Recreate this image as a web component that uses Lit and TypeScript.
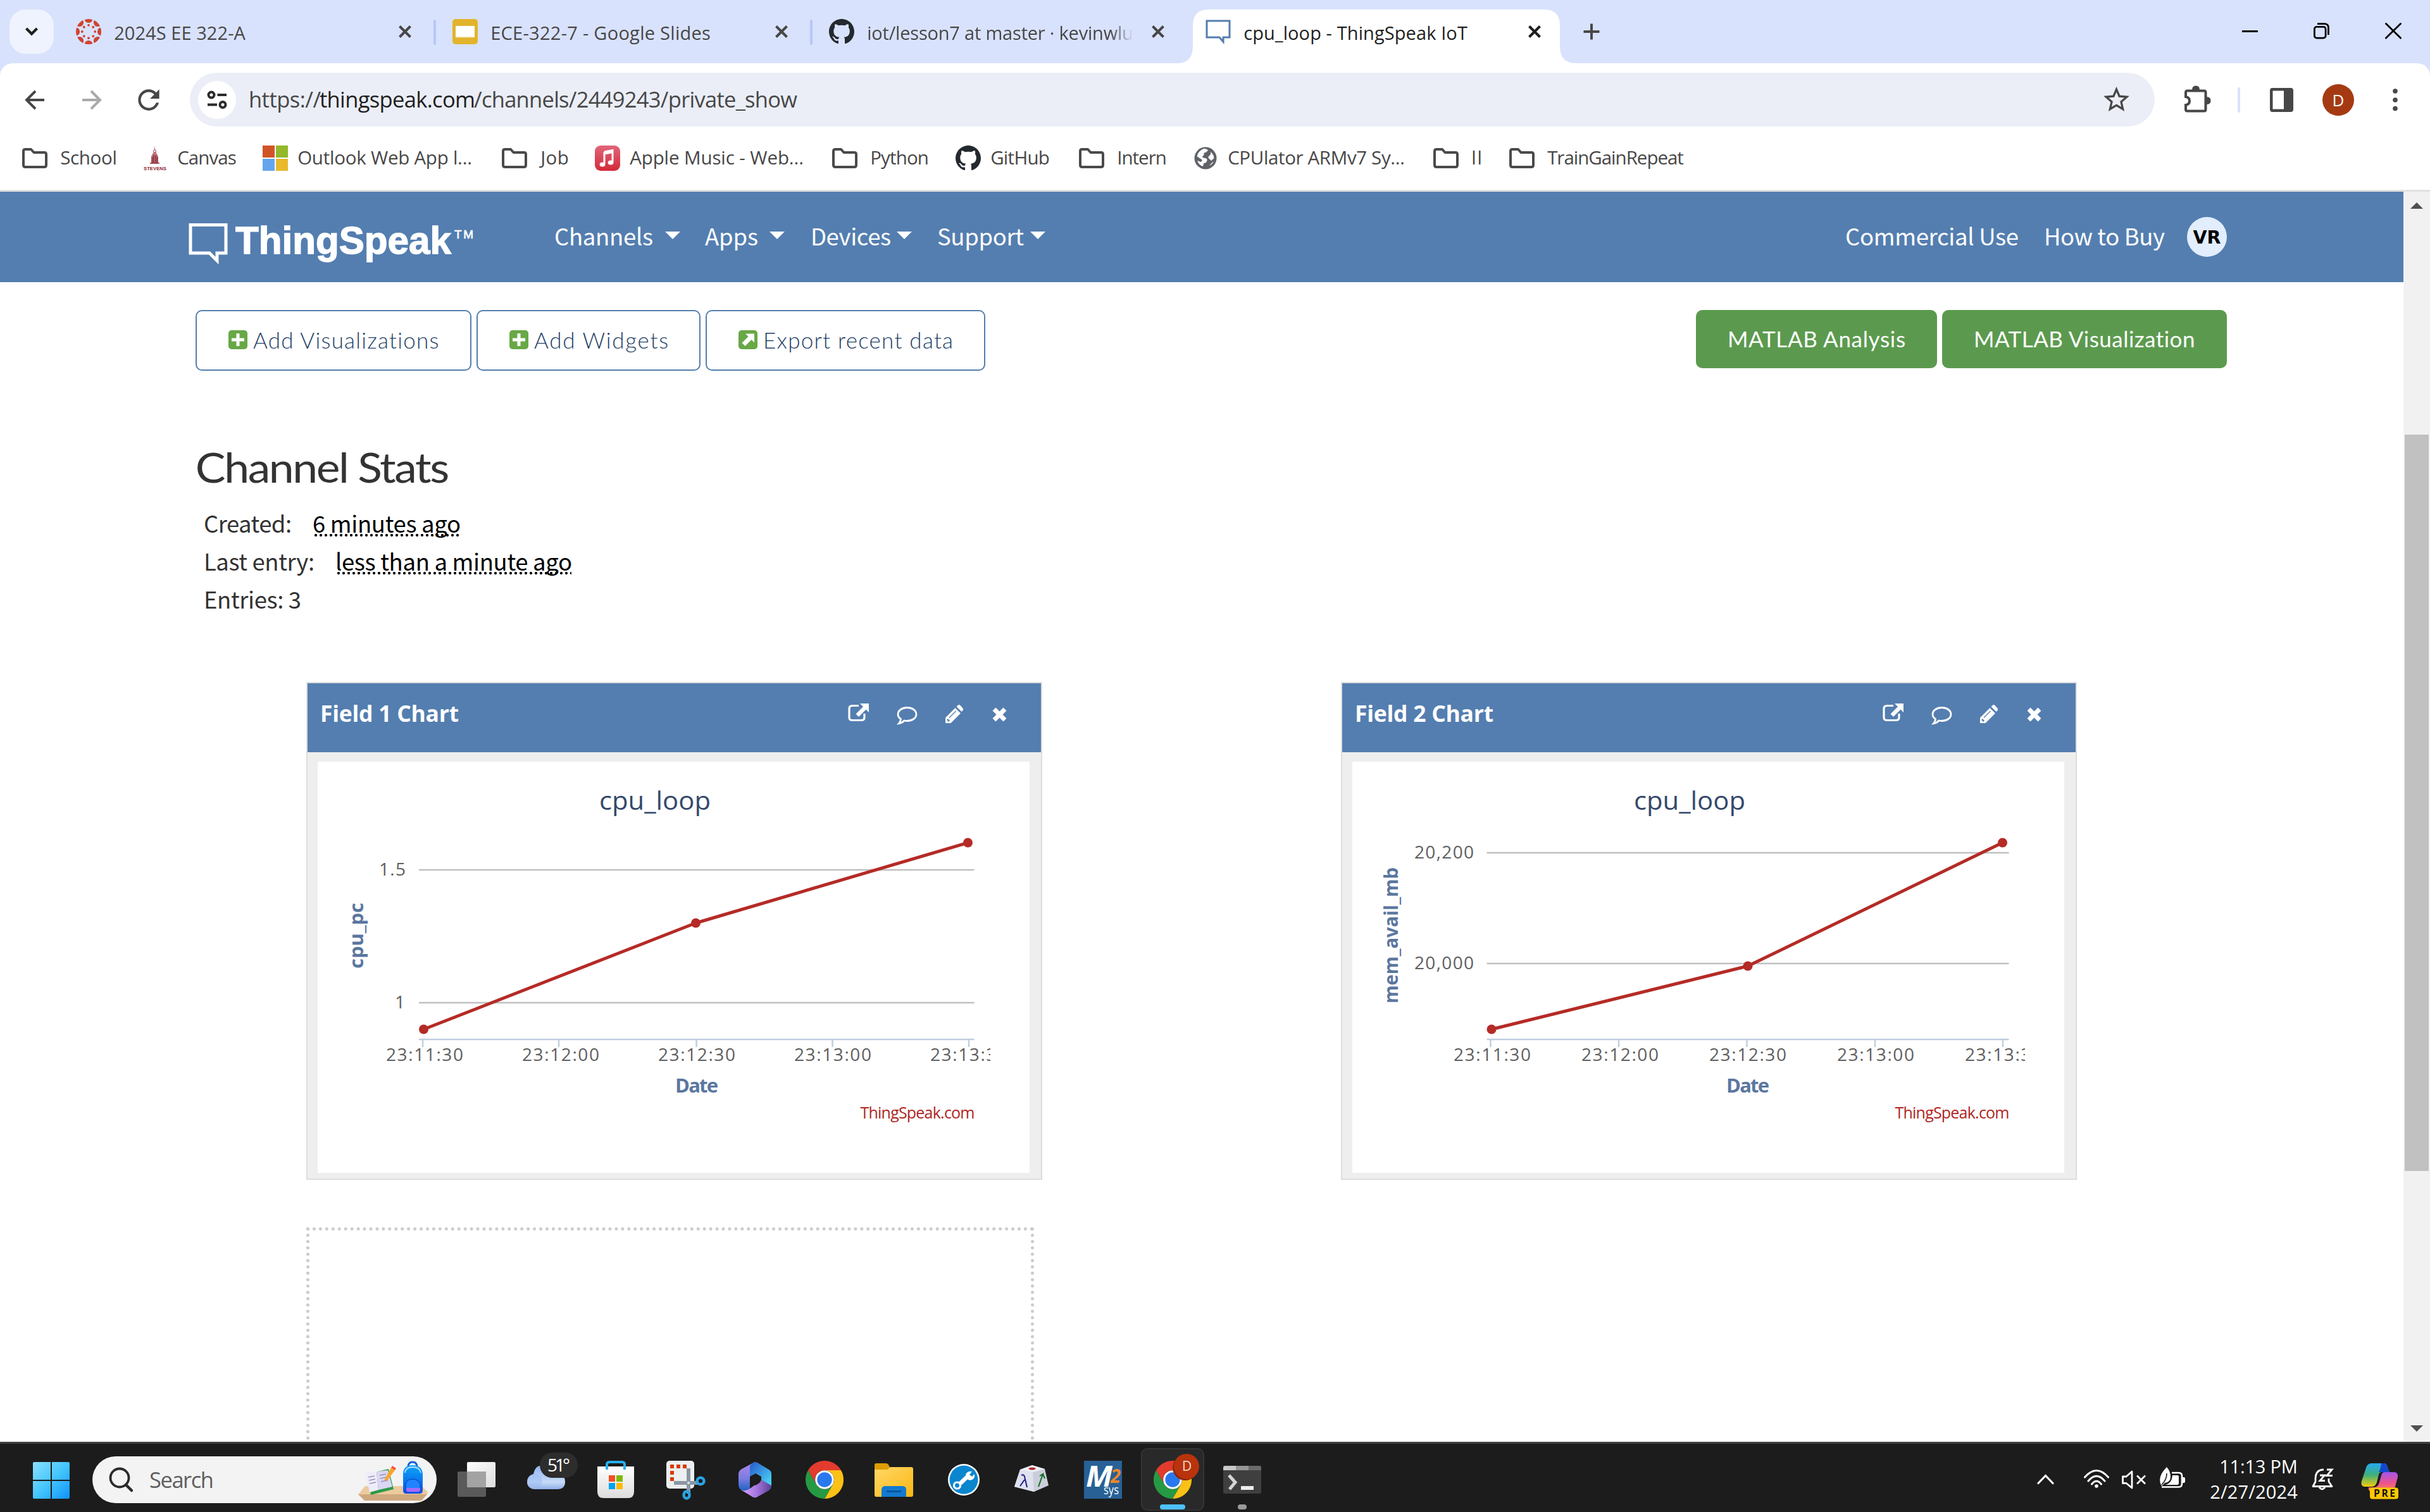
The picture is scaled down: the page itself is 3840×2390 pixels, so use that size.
import { LitElement, html, svg, css, nothing } from "lit";
import { customElement, property } from "lit/decorators.js";

/** A single line of text whose tracking is adjusted so that it fills a given width. */
@customElement("fit-text")
class FitText extends LitElement {
  @property() text = "";
  @property({ type: Number }) w = 0;

  static styles = css`
    :host {
      display: block;
      flex: none;
      white-space: pre;
    }
    .run {
      display: inline-block;
      margin-left: -0.03em;
    }
  `;

  updated() {
    const run = this.renderRoot.querySelector(".run") as HTMLElement;
    this.style.width = `${this.w}px`;
    run.style.letterSpacing = "0px";
    const size = parseFloat(getComputedStyle(run).fontSize);
    const natural = run.getBoundingClientRect().width;
    const gap = (this.w + size * 0.06 - natural) / Math.max(1, this.text.length - 1);
    run.style.letterSpacing = `${gap}px`;
  }

  render() {
    return html`<span class="run">${this.text}</span>`;
  }
}

const fit = (text: string, w: number, cls = "") =>
  html`<fit-text class=${cls} .text=${text} .w=${w}></fit-text>`;

const OCTO =
  "M8 0C3.58 0 0 3.58 0 8c0 3.54 2.29 6.53 5.47 7.59.4.07.55-.17.55-.38 0-.19-.01-.82-.01-1.49-2.01.37-2.53-.49-2.69-.94-.09-.23-.48-.94-.82-1.13-.28-.15-.68-.52-.01-.53.63-.01 1.08.58 1.23.82.72 1.21 1.87.87 2.33.66.07-.52.28-.87.51-1.07-1.78-.2-3.64-.89-3.64-3.95 0-.87.31-1.59.82-2.15-.08-.2-.36-1.02.08-2.12 0 0 .67-.21 2.2.82.64-.18 1.32-.27 2-.27.68 0 1.36.09 2 .27 1.53-1.04 2.2-.82 2.2-.82.44 1.1.16 1.92.08 2.12.51.56.82 1.27.82 2.15 0 3.07-1.87 3.75-3.65 3.95.29.25.54.73.54 1.48 0 1.07-.01 1.93-.01 2.2 0 .21.15.46.55.38A8.013 8.013 0 0016 8c0-4.42-3.58-8-8-8z";

const github = html`<svg width="40" height="40" viewBox="0 0 16 16"><path d=${OCTO} fill="#24292f" /></svg>`;

const canvasRing = html`<svg width="40" height="40" viewBox="-20 -20 40 40">
  <clipPath id="ring"><circle r="20" /></clipPath>
  <g clip-path="url(#ring)" fill="#cf4432">
    ${[0, 45, 90, 135, 180, 225, 270, 315].map(
      (a) => svg`<g transform="rotate(${a})"><circle cy="-20.5" r="6.6" /><circle cy="-10.2" r="1.9" /></g>`
    )}
  </g>
</svg>`;

const slides = html`<svg width="40" height="40" viewBox="0 0 40 40">
  <rect width="40" height="40" rx="5" fill="#e2b42c" />
  <rect x="5" y="11" width="30" height="18.5" fill="#f3dfa4" />
  <rect x="5" y="11" width="30" height="17" fill="#fff" />
</svg>`;

const bubble = html`<svg width="40" height="40" viewBox="0 0 40 40">
  <path d="M2 3H38V29H28V36L22 29H2Z" fill="#fff" stroke="#547eb0" stroke-width="3" />
</svg>`;

const folder = html`<svg width="42" height="40" viewBox="0 0 42 40">
  <path d="M3 9Q3 6 6 6H15L19.500 11H36Q39 11 39 14V31Q39 34 36 34H6Q3 34 3 31Z" fill="none" stroke="#4a4a4a" stroke-width="4" stroke-linejoin="round" />
</svg>`;

const stevens = html`<svg width="40" height="40" viewBox="0 0 40 40">
  <path d="M17.500 0L18.500 9L23 17V28H12V17L16.500 9Z" fill="#b97982" />
  <path d="M13.500 18V27M16 15V27M19 15V27M21.500 18V27M10 28H25" stroke="#8a2634" stroke-width="1.500" />
  <circle cx="17.500" cy="9" r="2" fill="#fff" stroke="#a03845" />
  <text x="0" y="39" font-family="Liberation Sans" font-size="8" font-weight="700" fill="#8f2433" textLength="36" lengthAdjust="spacingAndGlyphs">STEVENS</text>
</svg>`;

const msSquares = html`<svg width="40" height="40" viewBox="0 0 40 40">
  <path d="M0 0H19V19H0Z" fill="#d15427" /><path d="M21 0H40V19H21Z" fill="#93b82a" />
  <path d="M0 21H19V40H0Z" fill="#66a5ee" /><path d="M21 21H40V40H21Z" fill="#e9b92c" />
</svg>`;

const music = html`<svg width="40" height="40" viewBox="0 0 40 40">
  <linearGradient id="mus" x2="0" y2="1"><stop stop-color="#e0667a" /><stop offset="1" stop-color="#d32a3a" /></linearGradient>
  <rect width="40" height="40" rx="9" fill="url(#mus)" />
  <path d="M15 10L28 7.500V26.500M15 10V29.500M15 13L28 10.500" stroke="#fff" stroke-width="3" fill="none" />
  <ellipse cx="12" cy="30" rx="4.400" ry="3.600" fill="#fff" /><ellipse cx="25" cy="27" rx="4.400" ry="3.600" fill="#fff" />
</svg>`;

const globe = html`<svg width="36" height="40" viewBox="0 0 36 40">
  <circle cx="18" cy="20" r="17.500" fill="#5f6368" />
  <path d="M15 5Q21 5 22 8Q19 11 15 12Q17 15 13 17Q13 20 18 20Q22 21 20 25Q19 28 15 28Q15 32 13 33Q7 30 5 24L11 26L13 23L4.500 17Q6 9 15 5Z" fill="#fff" />
  <path d="M26 10Q31 14 31.500 20L27 24L22 19L24 16Q27 15 26 10ZM24 32Q27 28 31 25Q29 30 24 32Z" fill="#fff" />
</svg>`;

const closeX = (color: string) => html`<svg class="close" width="20" height="20" viewBox="0 0 20 20">
  <path d="M1.500 1.500L18.500 18.500M18.500 1.500L1.500 18.500" stroke=${color} stroke-width="4" />
</svg>`;

const TABS = [
  { icon: canvasRing, title: "2024S EE 322-A", w: 206 },
  { icon: slides, title: "ECE-322-7 - Google Slides", w: 346 },
  { icon: github, title: "iot/lesson7 at master · kevinwlu", w: 419, fade: true },
  { icon: bubble, title: "cpu_loop - ThingSpeak IoT", w: 352, active: true },
];

/* icon left edge, label left edge, label width */
const BOOKMARKS = [
  { icon: folder, title: "School", x: 34, tx: 96, w: 88 },
  { icon: stevens, title: "Canvas", x: 227, tx: 281, w: 92 },
  { icon: msSquares, title: "Outlook Web App l...", x: 415, tx: 471, w: 274 },
  { icon: folder, title: "Job", x: 792, tx: 855, w: 43 },
  { icon: music, title: "Apple Music - Web...", x: 940, tx: 996, w: 273 },
  { icon: folder, title: "Python", x: 1314, tx: 1376, w: 91 },
  { icon: github, title: "GitHub", x: 1510, tx: 1566, w: 92 },
  { icon: folder, title: "Intern", x: 1704, tx: 1766, w: 77 },
  { icon: globe, title: "CPUlator ARMv7 Sy...", x: 1887, tx: 1941, w: 278 },
  { icon: folder, title: "ll", x: 2264, tx: 2326, w: 15 },
  { icon: folder, title: "TrainGainRepeat", x: 2384, tx: 2446, w: 214 },
];

@customElement("browser-chrome")
class BrowserChrome extends LitElement {
  static styles = css`
    :host {
      display: block;
      font-family: "Open Sans", "Noto Sans", sans-serif;
      color: #474747;
    }
    svg {
      display: block;
      flex: none;
    }
    .strip {
      display: flex;
      height: 100px;
      background: #d9e2fc;
      font-size: 29px;
      line-height: 40px;
    }
    .search-tabs {
      flex: none;
      display: grid;
      place-items: center;
      width: 70px;
      height: 70px;
      margin: 15px 5px 0 15px;
      border-radius: 25px;
      background: #eef3fe;
    }
    .tab {
      position: relative;
      flex: none;
      box-sizing: border-box;
      width: 595px;
      height: 100px;
      padding-left: 30px;
      display: flex;
      align-items: center;
      gap: 21px;
    }
    .label {
      width: 434px;
      overflow: hidden;
      margin-top: 3px;
    }
    .faded {
      -webkit-mask-image: linear-gradient(90deg, #000 385px, transparent 420px);
      mask-image: linear-gradient(90deg, #000 385px, transparent 420px);
    }
    .tab .close {
      margin-left: -6px;
    }
    .tab.divided::after {
      content: "";
      position: absolute;
      right: -4px;
      top: 31px;
      width: 4px;
      height: 40px;
      border-radius: 2px;
      background: #b6c8f8;
    }
    .tab .shape {
      position: absolute;
      left: -15px;
      top: 15px;
    }
    .tab.active {
      color: #1f1f1f;
    }
    .tab.active > * {
      z-index: 1;
    }
    .tab.active > .shape {
      z-index: 0;
    }
    .plus {
      margin: 37px 0 0 32px;
    }
    .window {
      margin: 36px 45px 0 auto;
      display: flex;
      gap: 88px;
    }
    .bars {
      background: #d9e2fc;
    }
    .sheet {
      background: #fff;
      border-radius: 20px 20px 0 0;
      border-bottom: 3px solid #e1e1df;
    }
    .tools {
      display: flex;
      align-items: center;
      height: 85px;
      padding: 15px 0 0 30px;
    }
    .forward {
      margin-left: 40px;
    }
    .reload {
      margin-left: 40px;
    }
    .omni {
      box-sizing: border-box;
      display: flex;
      align-items: center;
      width: 3105px;
      height: 85px;
      margin-left: 40px;
      padding: 0 36px 0 13px;
      border-radius: 43px;
      background: #ebeef7;
      font-size: 34.500px;
      line-height: 50px;
    }
    .info {
      display: grid;
      place-items: center;
      width: 60px;
      height: 60px;
      border-radius: 50%;
      background: #fff;
      margin-right: 21px;
    }
    .host {
      color: #1f1f1f;
    }
    .omni fit-text {
      margin-top: -2px;
    }
    .omni .star {
      margin-left: auto;
    }
    .ext {
      margin-left: 45px;
    }
    .rule {
      width: 4px;
      height: 40px;
      margin: 0 47px 0 40px;
      background: #d9e2fc;
      border-radius: 2px;
    }
    .avatar {
      width: 50px;
      height: 50px;
      margin: 0 60px 0 46px;
      border-radius: 50%;
      background: #a53a12;
      color: #fff;
      font-size: 26px;
      line-height: 51px;
      text-align: center;
    }
    .marks {
      display: flex;
      align-items: center;
      height: 100px;
      padding-left: 34px;
      font-size: 29.500px;
      line-height: 40px;
    }
    .mark {
      display: grid;
      align-items: center;
      flex: none;
    }
    .mark fit-text {
      margin-top: -3px;
    }
  `;

  render() {
    return html`
      <div class="strip">
        <div class="search-tabs">
          <svg width="22" height="16" viewBox="0 0 22 16"><path d="M2.500 3L11 11.500L19.500 3" fill="none" stroke="#1f1f1f" stroke-width="4.200" /></svg>
        </div>
        ${TABS.map(
          (t, i) => html`<div class="tab ${t.active ? "active" : ""} ${i < 2 ? "divided" : ""}">
            ${t.active
              ? html`<svg class="shape" width="630" height="85" viewBox="0 0 630 85">
                  <path d="M0 85Q25 85 25 58V25Q25 0 50 0H580Q605 0 605 25V58Q605 85 630 85Z" fill="#fff" />
                </svg>`
              : nothing}
            ${t.icon}
            <div class="label ${t.fade ? "faded" : ""}">${fit(t.title, t.w)}</div>
            ${closeX(t.active ? "#1f1f1f" : "#474747")}
          </div>`
        )}
        <svg class="plus" width="26" height="26" viewBox="0 0 26 26"><path d="M13 0.500V25.500M0.500 13H25.500" stroke="#474747" stroke-width="4" /></svg>
        <div class="window">
          <svg width="25" height="26" viewBox="0 0 25 26"><path d="M0 13.500H25" stroke="#000" stroke-width="3" /></svg>
          <svg width="25" height="26" viewBox="0 0 25 26" fill="none" stroke="#000" stroke-width="2.800">
            <rect x="1.400" y="6.400" width="17.700" height="17.700" rx="3.500" /><path d="M6 1.700H17Q23.500 1.700 23.500 8V19" />
          </svg>
          <svg width="26" height="26" viewBox="0 0 26 26"><path d="M0.500 0.500L25.500 25M25.500 0.500L0.500 25" stroke="#000" stroke-width="2.800" /></svg>
        </div>
      </div>
      <div class="bars">
        <div class="sheet">
          <div class="tools">
            <svg width="50" height="50" viewBox="0 0 50 50"><path d="M40 25H13M26 11L12 25L26 39" fill="none" stroke="#474747" stroke-width="4" /></svg>
            <svg class="forward" width="50" height="50" viewBox="-10 0 50 50"><path d="M0 25H27M14 11L28 25L14 39" fill="none" stroke="#a9a9a9" stroke-width="4" /></svg>
            <svg class="reload" width="50" height="50" viewBox="0 0 24 24"><path fill="#474747" d="M17.650 6.350C16.200 4.900 14.210 4 12 4c-4.420 0-7.990 3.580-7.990 8s3.570 8 7.990 8c3.730 0 6.840-2.550 7.730-6h-2.080c-.82 2.330-3.040 4-5.650 4-3.310 0-6-2.690-6-6s2.690-6 6-6c1.660 0 3.140.69 4.220 1.780L13 11h7V4l-2.350 2.350z" /></svg>
            <div class="omni">
              <div class="info">
                <svg width="32" height="30" viewBox="0 0 32 30" fill="none" stroke="#2b2b2b" stroke-width="4">
                  <circle cx="7" cy="7" r="4.500" /><path d="M16.500 7H31M1 22.500H16" /><circle cx="25" cy="22.500" r="4.500" />
                </svg>
              </div>
              ${fit("https://", 112)}${fit("thingspeak.com", 244, "host")}${fit("/channels/2449243/private_show", 509)}
              <svg class="star" width="49" height="49" viewBox="0 0 24 24"><path fill="#474747" d="M22 9.240l-7.190-.62L12 2 9.190 8.630 2 9.240l5.460 4.730L5.820 21 12 17.270 18.180 21l-1.630-7.030L22 9.240zM12 15.400l-3.760 2.270 1-4.280-3.320-2.880 4.380-.38L12 6.100l1.710 4.040 4.380.38-3.320 2.880 1 4.280L12 15.400z" /></svg>
            </div>
            <svg class="ext" width="46" height="50" viewBox="0 0 46 50">
              <path d="M4 13Q4 10.500 6.500 10.500H33Q35.500 10.500 35.500 13V40Q35.500 42.500 33 42.500H6.500Q4 42.500 4 40V33Q10 32 10 26.500T4 20Z" fill="none" stroke="#474747" stroke-width="4" />
              <path d="M14 9Q14 2.500 20 2.500T26 9ZM37 20Q43.500 20 43.500 26T37 32Z" fill="#474747" />
            </svg>
            <div class="rule"></div>
            <svg width="37" height="38" viewBox="0 0 37 38"><path fill="#474747" fill-rule="evenodd" d="M4 0H33Q37 0 37 4V34Q37 38 33 38H4Q0 38 0 34V4Q0 0 4 0ZM4.500 4.500V33.500H22V4.500Z" /></svg>
            <div class="avatar">D</div>
            <svg width="10" height="38" viewBox="0 0 10 38" fill="#474747"><circle cx="5" cy="5" r="3.800" /><circle cx="5" cy="19" r="3.800" /><circle cx="5" cy="32.500" r="3.800" /></svg>
          </div>
          <div class="marks">
            ${BOOKMARKS.map((b, i) => {
              const next = BOOKMARKS[i + 1]?.x ?? b.tx + b.w;
              return html`<div class="mark" style="grid-template-columns:${b.tx - b.x}px ${next - b.tx}px">
                ${b.icon}${fit(b.title, b.w)}
              </div>`;
            })}
          </div>
        </div>
      </div>
    `;
  }
}

interface ChartData {
  title: string;
  yTitle: string;
  yTitleSpan: [number, number];
  left: number;
  grid: { y: number; label: string; x: number; w: number }[];
  ticks: number[];
  labels: number[];
  points: [number, number][];
  dateX: number;
}

const CHARTS: ChartData[] = [
  {
    title: "Field 1 Chart",
    yTitle: "cpu_pc",
    yTitleSpan: [225, 326],
    left: 160,
    grid: [
      { y: 171, label: "1.5", x: 97, w: 42 },
      { y: 381, label: "1", x: 122, w: 14 },
    ],
    ticks: [166, 381, 598.5, 813.5, 1029],
    labels: [109, 324, 539, 754, 969],
    points: [[167.5, 423], [597.5, 255], [1027.5, 128]],
    dateX: 567,
  },
  {
    title: "Field 2 Chart",
    yTitle: "mem_avail_mb",
    yTitleSpan: [169, 381],
    left: 212.5,
    grid: [
      { y: 144, label: "20,200", x: 98, w: 94 },
      { y: 319, label: "20,000", x: 98, w: 94 },
    ],
    ticks: [218.5, 421, 623.5, 826, 1028],
    labels: [161, 363, 565, 767, 969],
    points: [[220, 423], [625, 323], [1027.5, 128]],
    dateX: 593,
  },
];
const TIMES = ["23:11:30", "23:12:00", "23:12:30", "23:13:00", "23:13:30"];

@customElement("field-card")
class FieldCard extends LitElement {
  @property({ attribute: false }) data!: ChartData;

  static styles = css`
    :host {
      display: block;
      box-sizing: border-box;
      width: 1163px;
      height: 787px;
      border: 2px solid #ddd;
      background: #eee;
      font-family: "Open Sans", "Noto Sans", sans-serif;
    }
    svg {
      display: block;
      flex: none;
    }
    .head {
      display: flex;
      box-sizing: border-box;
      height: 109px;
      padding: 20px 54px 0 21px;
      background: #547eb0;
      color: #fff;
      font-size: 35.500px;
      font-weight: 700;
      line-height: 54px;
    }
    .acts {
      display: flex;
      margin-left: auto;
    }
    .body {
      margin: 15px 18px 0 16px;
      height: 650px;
      background: #fff;
    }
  `;

  render() {
    const d = this.data;
    const [y0, y1] = d.yTitleSpan;
    return html`
      <div class="head">
        ${fit(d.title, 217)}
        <div class="acts">
          <svg width="77" height="52" viewBox="0 0 77 52">
            <path d="M17 15.500H7Q2 15.500 2 20V34Q2 38.500 7 38.500H21Q26 38.500 26 34V28" fill="none" stroke="#fff" stroke-width="3.200" />
            <path d="M19 12H33V26L28.500 21.500L17 33L12.500 28.500L24 17Z" fill="#fff" />
          </svg>
          <svg width="76" height="52" viewBox="0 0 76 52">
            <path d="M16.500 18.500C24.500 18.500 31 23 31 29S24.500 39.500 16.500 39.500C15 39.500 13.500 39.300 12 39Q9 42.500 3.500 43.500Q6.500 40 6.500 36.500C3.500 34.500 2 32 2 29C2 23 8.500 18.500 16.500 18.500Z" fill="none" stroke="#fff" stroke-width="2.800" />
          </svg>
          <svg width="75" height="52" viewBox="0 0 75 52">
            <path d="M1 43V34.500L16.500 19L25 27.500L9.500 43ZM18.500 17L21 14.500Q22.500 13.500 24 14.500L28.500 19.500Q30 21 28.500 23L26.500 25Z" fill="#fff" />
            <path d="M7 34.500L17.500 24" stroke="#547eb0" stroke-width="1.200" /><path d="M4 37L7 40" stroke="#547eb0" stroke-width="2.500" />
          </svg>
          <svg width="23" height="52" viewBox="0 0 23 52"><path d="M3 21L20 38M20 21L3 38" stroke="#fff" stroke-width="7" /></svg>
        </div>
      </div>
      <div class="body">
        <svg width="1125" height="650" viewBox="0 0 1125 650" font-family="'Open Sans','Noto Sans',sans-serif">
          <clipPath id="edge"><rect width="1063" height="650" /></clipPath>
          <text x="445" y="76" font-size="40" fill="#34496b" textLength="176" lengthAdjust="spacingAndGlyphs">cpu_loop</text>
          ${d.grid.map(
            (g) => svg`<path d="M${d.left} ${g.y}H1037.500" stroke="#c0c0c0" stroke-width="2.500" />
              <text x=${g.x} y=${g.y + 9} font-size="28" fill="#606060" textLength=${g.w}>${g.label}</text>`
          )}
          <path d="M${d.left} 439H1037.500" stroke="#c0cde0" stroke-width="2.500" />
          ${d.ticks.map((x) => svg`<path d="M${x} 439V451" stroke="#c0cde0" stroke-width="2.500" />`)}
          <g clip-path="url(#edge)" font-size="28" fill="#606060">
            ${d.labels.map((x, i) => svg`<text x=${x - 1} y="473" textLength="122">${TIMES[i]}</text>`)}
          </g>
          <polyline points=${d.points.map((p) => p.join(",")).join(" ")} fill="none" stroke="#b52b26" stroke-width="5" stroke-linejoin="round" />
          ${d.points.map(([x, y]) => svg`<circle cx=${x} cy=${y} r="7.500" fill="#b52b26" />`)}
          <text x=${d.dateX - 2} y="523" font-size="31" font-weight="700" fill="#5b769f" textLength="68">Date</text>
          <text transform="translate(72 ${y1 + 1}) rotate(-90)" font-size="30" font-weight="700" fill="#5b769f" textLength=${y1 - y0 + 3} lengthAdjust="spacingAndGlyphs">${d.yTitle}</text>
          <text x="857.500" y="564" font-size="25" fill="#b0261f" textLength="181">ThingSpeak.com</text>
        </svg>
      </div>
    `;
  }
}

const caret = (gap: number, after: number) =>
  html`<svg width="24" height="12" viewBox="0 0 24 12" style="margin:-6px ${after}px 0 ${gap}px"><path d="M0 0H24L12 12Z" fill="#fff" /></svg>`;

const plusBadge = html`<svg width="30" height="30" viewBox="0 0 30 30"><rect width="30" height="30" rx="5" fill="#68a846" /><path d="M15 5V25M5 15H25" stroke="#fff" stroke-width="5" /></svg>`;
const arrowBadge = html`<svg width="30" height="30" viewBox="0 0 30 30"><rect width="30" height="30" rx="5" fill="#68a846" /><path d="M11 5.500H25V19.500L20.500 15L10.500 25L5.500 20L15.500 10Z" fill="#fff" /></svg>`;

@customElement("channel-page")
class ChannelPage extends LitElement {
  static styles = css`
    :host {
      display: flex;
      height: 1976px;
      overflow: hidden;
      background: #fff;
      color: #333;
      font-family: "Noto Sans CJK SC", sans-serif;
      font-size: 36.500px;
    }
    svg {
      display: block;
      flex: none;
    }
    .page {
      width: 3798px;
      overflow: hidden;
    }
    nav {
      display: flex;
      align-items: center;
      height: 143px;
      padding-left: 298px;
      background: #547eb0;
      color: #fff;
      line-height: 60px;
    }
    nav fit-text {
      margin-top: -3px;
    }
    .logo {
      margin-right: 129px;
    }
    .right {
      display: flex;
      align-items: center;
      gap: 42px;
      margin: 0 279px 0 auto;
    }
    .user {
      width: 63px;
      height: 63px;
      margin-left: -6px;
      border-radius: 50%;
      background: #e2edfd;
      color: #000;
      text-align: center;
      font: 700 28.500px/65px "DejaVu Sans", sans-serif;
    }
    .actions {
      display: flex;
      align-items: flex-start;
      gap: 8px;
      padding: 44px 279px 0 309px;
      height: 96px;
      font: 300 35px/50px Lato, sans-serif;
    }
    .btn {
      box-sizing: border-box;
      display: flex;
      align-items: center;
      gap: 10px;
      height: 96px;
      padding: 0 50px;
      border: 2.500px solid #547eb0;
      border-radius: 10px;
      color: #243f66;
    }
    .btn svg {
      margin-bottom: 2px;
    }
    .btn fit-text {
      margin-bottom: 3px;
    }
    .solid {
      height: 92px;
      border: 0;
      padding: 0 51px;
      background: #5b9a4e;
      color: #fff;
      font-weight: 400;
    }
    .push {
      margin-left: auto;
    }
    h2 {
      margin: 112px 0 18px 311px;
      font: 400 65px/80px Lato, sans-serif;
    }
    .stretch {
      transform: scaleX(1.1);
      transform-origin: 0 50%;
    }
    .stat {
      display: flex;
      gap: 35px;
      height: 60px;
      line-height: 62px;
      padding-left: 323px;
    }
    .when {
      height: 52px;
      color: #000;
      background: radial-gradient(circle, #000 1.900px, transparent 2.300px) 0 48px / 8px 4px repeat-x;
    }
    .cards {
      display: flex;
      gap: 472px;
      margin: 102px 0 0 484px;
    }
    .slot {
      box-sizing: border-box;
      width: 1150px;
      height: 787px;
      margin: 75px 0 0 484px;
      border: 5px dotted #ccc;
    }
    .bar {
      width: 42px;
      background: #f1f1f1;
      display: flex;
      flex-direction: column;
      align-items: center;
    }
    .up {
      margin-top: 17px;
    }
    .down {
      margin: auto 0 16px;
    }
    .thumb {
      width: 38px;
      height: 1164px;
      margin-top: 357px;
      background: #c1c1c1;
    }
  `;

  render() {
    return html`
      <div class="page">
        <nav>
          <svg class="logo" width="450" height="143" viewBox="0 0 450 143">
            <path d="M3 52.500H59V97H45V109L33 97H3Z" fill="none" stroke="#fff" stroke-width="5" />
            <text x="74" y="98" font-family="Liberation Sans" font-weight="700" font-size="61" fill="#fff" stroke="#fff" stroke-width="1.400" textLength="341" lengthAdjust="spacingAndGlyphs">ThingSpeak</text>
            <text x="420" y="74" font-family="Liberation Sans" font-size="19" fill="#fff" stroke="#fff" stroke-width=".7" textLength="30">TM</text>
          </svg>
          ${fit("Channels", 154)}${caret(20, 40)}${fit("Apps", 82)}${caret(19, 42)}${fit("Devices", 125)}${caret(10, 41)}${fit("Support", 135)}${caret(11, 0)}
          <div class="right">
            ${fit("Commercial Use", 272)}${fit("How to Buy", 189)}
            <div class="user">VR</div>
          </div>
        </nav>
        <div class="actions">
          <div class="btn">${plusBadge}${fit("Add Visualizations", 292)}</div>
          <div class="btn">${plusBadge}${fit("Add Widgets", 210)}</div>
          <div class="btn">${arrowBadge}${fit("Export recent data", 298)}</div>
          <div class="btn solid push">${fit("MATLAB Analysis", 279)}</div>
          <div class="btn solid">${fit("MATLAB Visualization", 348)}</div>
        </div>
        <h2>${fit("Channel Stats", 400, "stretch")}</h2>
        <div class="stat">${fit("Created:", 137)}${fit("6 minutes ago", 232, "when")}</div>
        <div class="stat">${fit("Last entry:", 173)}${fit("less than a minute ago", 372, "when")}</div>
        <div class="stat">${fit("Entries: 3", 152)}</div>
        <div class="cards">${CHARTS.map((c) => html`<field-card .data=${c}></field-card>`)}</div>
        <div class="slot"></div>
      </div>
      <div class="bar">
        <svg class="up" width="20" height="10" viewBox="0 0 20 10"><path d="M10 0L20 10H0Z" fill="#505050" /></svg>
        <div class="thumb"></div>
        <svg class="down" width="20" height="10" viewBox="0 0 20 10"><path d="M0 0H20L10 10Z" fill="#505050" /></svg>
      </div>
    `;
  }
}

const chromeLogo = svg`
  <path d="M-26 -15A30 30 0 0 1 26 -15L0 -15A15 15 0 0 0 -13 7.500Z" fill="#e33b2e" />
  <path d="M-26 -15A30 30 0 0 1 26 -15L0 -15A15 15 0 0 0 -13 7.500Z" fill="#fbc116" transform="rotate(120)" />
  <path d="M-26 -15A30 30 0 0 1 26 -15L0 -15A15 15 0 0 0 -13 7.500Z" fill="#269a43" transform="rotate(240)" />
  <circle r="14.800" fill="#fff" /><circle r="11.700" fill="#2a78ee" />`;

/* each drawing sits in a 110 × 108 cell with its optical centre at 55,57 */
const APPS = [
  svg`<linearGradient id="tv" x2="1" y2="1"><stop stop-color="#fff" /><stop offset="1" stop-color="#dcdcdc" /></linearGradient>
    <rect x="40" y="29" width="45" height="40" rx="2" fill="url(#tv)" /><rect x="25" y="44" width="45" height="40" rx="2" fill="#5a5a5a" />
    <path d="M40 44H70V69H40Z" fill="#a3a3a3" />`,
  svg`<linearGradient id="cl" x2="0" y2="1"><stop stop-color="#8fb4f0" /><stop offset=".7" stop-color="#c6dbf8" /><stop offset="1" stop-color="#8faee8" /></linearGradient>
    <path d="M37 72Q25 71 25 60Q26 50 35 48Q38 33 50 35Q64 36 68 48Q85 48 85 60Q85 72 73 72Z" fill="url(#cl)" />
    <circle cx="37" cy="60" r="12" fill="#9ebcf0" opacity=".55" />
    <rect x="45" y="14" width="60" height="40" rx="20" fill="#2d2d2d" />
    <text x="57" y="44" font-size="28" fill="#fff" textLength="36">51°</text>`,
  svg`<path d="M41 37V33Q41 29 45 29H65Q69 29 69 33V40" fill="none" stroke="#25b0ee" stroke-width="4" />
    <linearGradient id="st" x2="0" y2="1"><stop stop-color="#fff" /><stop offset="1" stop-color="#dcdcdc" /></linearGradient>
    <path d="M26 36H84V76Q84 86 74 86H36Q26 86 26 76Z" fill="url(#st)" />
    <path d="M41 34V41M69 34V41" stroke="#25b0ee" stroke-width="4" />
    <path d="M44 50H54V60H44Z" fill="#f25022" /><path d="M56 50H66V60H56Z" fill="#7fba00" /><path d="M44 62H54V72H44Z" fill="#00a4ef" /><path d="M56 62H66V72H56Z" fill="#ffb900" />`,
  svg`<rect x="25" y="27" width="44" height="44" rx="5" fill="#eceff1" />
    <path d="M31 33H37V39H31ZM41 33H47V39H41ZM51 33H57V39H51ZM31 43H37V49H31ZM31 53H37V59H31Z" fill="#d83b01" />
    <path d="M37 62H76M60 39V79" stroke="#8b97a3" stroke-width="6" /><circle cx="60" cy="62" r="2" fill="#dfe5ea" />
    <ellipse cx="79" cy="59" rx="5.500" ry="5.200" fill="none" stroke="#28a3e4" stroke-width="4.500" /><ellipse cx="57" cy="81" rx="4.500" ry="5.500" fill="none" stroke="#28a3e4" stroke-width="4.500" />`,
  svg`<linearGradient id="ma" x2="0" y2="1"><stop stop-color="#b088ea" /><stop offset=".55" stop-color="#7a7be0" /><stop offset="1" stop-color="#0f5fc0" /></linearGradient>
    <linearGradient id="mb" x2="1" y2="1"><stop stop-color="#2657c9" /><stop offset="1" stop-color="#4fe0fb" /></linearGradient>
    <linearGradient id="mc" x2="1" y2="0"><stop stop-color="#dba3ff" /><stop offset=".5" stop-color="#a878e0" /><stop offset="1" stop-color="#5a3f96" /></linearGradient>
    <path d="M55 29L34 40Q29 43 29 48V65Q29 70 33 73L41 77Q47 76 47 70V38Z" fill="url(#ma)" />
    <path d="M47 35L52 30Q55 28 59 30L77 41Q81 43 81 48V68L65 58V52L56 47L47 52Z" fill="url(#mb)" />
    <path d="M33 73Q40 76 47 71L65 58V57L81 66Q81 71 77 74L59 84Q55 86.500 51 84Z" fill="url(#mc)" />
    <path d="M48 52L55.500 48L63.500 52V61L56 66L48 61.500Z" fill="#1c1c1c" />`,
  svg`<g transform="translate(55 57)">${chromeLogo}</g>`,
  svg`<linearGradient id="fo" x2="1" y2="1"><stop stop-color="#ffd868" /><stop offset="1" stop-color="#fcb713" /></linearGradient>
    <path d="M24 34Q24 31 27 31H42Q45 31 47 35L50 41H24Z" fill="#dd9d05" />
    <path d="M24 41H44L49 37H82Q85 37 85 40V81Q85 84 82 84H27Q24 84 24 81Z" fill="url(#fo)" />
    <path d="M35 84V73Q35 67 41 67H68Q74 67 74 73V84Z" fill="#1279d1" /><path d="M43 75.500H66" stroke="#0a4f93" stroke-width="2.500" />`,
  svg`<circle cx="55" cy="57" r="25" fill="#fff" /><circle cx="55" cy="57" r="22.500" fill="#0a86cf" />
    <path d="M46 66L63 50" stroke="#fff" stroke-width="6.500" /><circle cx="44.500" cy="66" r="5" fill="#0a86cf" stroke="#fff" stroke-width="3.200" />
    <path d="M59 55Q56 48 61 45Q64 43 68 44L64 49L68 52L72 48Q73 55 68 57Q63 59 59 55Z" fill="#fff" />`,
  svg`<g transform="translate(-2 0)"><path d="M36 41L55 34L75 40L81 66L58 76L27 68Z" fill="#c9ced9" /><path d="M36 41L55 34L75 40L56 45Z" fill="#eef0f5" />
    <path d="M36 41L56 45L58 76L27 68Z" fill="#dde2ee" /><ellipse cx="55" cy="39.500" rx="5.500" ry="2" fill="#b02a2a" />
    <path d="M38 50Q42 48 43 52L47 69M43 57L36 67" stroke="#201c86" stroke-width="2" fill="none" />
    <path d="M65 68L72 48L67 51M72 48L75 55" stroke="#176a22" stroke-width="2" fill="none" /></g>`,
  svg`<rect x="25" y="27" width="60" height="60" fill="#286196" />
    <text x="28" y="68" font-size="46" font-weight="700" font-style="italic" fill="#fff" textLength="42" lengthAdjust="spacingAndGlyphs">M</text>
    <text x="67" y="62" font-size="31" font-weight="700" font-style="italic" fill="#f0862a" textLength="16" lengthAdjust="spacingAndGlyphs">2</text>
    <text x="56" y="80" font-size="20" fill="#fff" textLength="24" lengthAdjust="spacingAndGlyphs">sys</text>`,
  svg`<rect x="6" y="8" width="98" height="97" rx="9" fill="#292929" stroke="#343434" stroke-width="2" />
    <g transform="translate(55 57)">${chromeLogo}</g>
    <circle cx="75" cy="38" r="20" fill="#8f2609" /><circle cx="77" cy="36" r="20" fill="#b9330d" />
    <text x="70" y="43" font-size="21" fill="#f3d9cf">D</text>
    <rect x="35" y="96" width="40" height="8" rx="4" fill="#4cc2ff" />`,
  svg`<rect x="25" y="35" width="60" height="44" rx="3" fill="#3f3f3f" /><path d="M25 42V38Q25 35 28 35H45V42Z" fill="#c8c8c8" /><path d="M45 35H65V42H45Z" fill="#959595" /><path d="M65 35H82Q85 35 85 38V42H65Z" fill="#6a6a6a" />
    <path d="M34 50L44 61L35 72" fill="none" stroke="#d5d5d5" stroke-width="5" /><rect x="53" y="67" width="20" height="6" fill="#ededed" />
    <rect x="48" y="96" width="14" height="8" rx="4" fill="#9a9a9a" />`,
];

@customElement("task-bar")
class TaskBar extends LitElement {
  static styles = css`
    :host {
      display: flex;
      align-items: flex-start;
      box-sizing: border-box;
      height: 111px;
      border-top: 3px solid #404040;
      background: #1c1c1c;
      font-family: "Open Sans", "Noto Sans", sans-serif;
    }
    svg {
      display: block;
      flex: none;
    }
    .search {
      display: flex;
      align-items: center;
      box-sizing: border-box;
      width: 544px;
      height: 74px;
      margin: 20px 8px 0 36px;
      padding: 0 12px 0 26px;
      border-radius: 37px;
      background: #f3f3f3;
      color: #5f5f5f;
      font-size: 34.500px;
      line-height: 50px;
      gap: 27px;
    }
    .search .art {
      margin-left: auto;
    }
    .tray {
      display: flex;
      margin-left: auto;
      padding-right: 50px;
    }
    .clock {
      width: 137px;
      margin: 16px 23px 0 40px;
      color: #fff;
      font-size: 29px;
      line-height: 40px;
      display: flex;
      flex-direction: column;
      align-items: flex-end;
    }
  `;

  render() {
    return html`
      <svg width="110" height="108" viewBox="0 0 110 108">
        <linearGradient id="wi" x2="1" y2="1"><stop stop-color="#8be0ff" /><stop offset=".5" stop-color="#45c6fd" /><stop offset="1" stop-color="#0f93fb" /></linearGradient>
        <path d="M52 31Q52 29 54 29H80V57H52ZM82 29H108Q110 29 110 31V57H82ZM52 59H80V87H54Q52 87 52 85ZM82 59H110V85Q110 87 108 87H82Z" fill="url(#wi)" />
      </svg>
      <div class="search">
        <svg width="38" height="40" viewBox="0 0 38 40"><circle cx="17" cy="17" r="14.500" fill="none" stroke="#2a2a2a" stroke-width="3.800" /><path d="M27 28L36 37" stroke="#2a2a2a" stroke-width="4.500" stroke-linecap="round" /></svg>
        ${fit("Search", 100)}
        <svg class="art" width="116" height="74" viewBox="0 0 116 74">
          <path d="M4 60L15 47H104L115 57L108 65H12Z" fill="#eccb9f" /><path d="M4 60H113L104 70H14Z" fill="#cfa87d" />
          <path d="M17 28L52 20L60 52L24 61Z" fill="#2f9a4a" /><path d="M15 26L33 24L36 53L22 57Z" fill="#efecfa" /><path d="M33 24L51 22L58 48L36 53Z" fill="#dcd6f2" />
          <path d="M20 33L30 31M21 38L31 36M22 43L32 41M38 30L48 28M39 35L49 33M40 40L51 38" stroke="#9b93bd" stroke-width="1.500" />
          <path d="M45 38L56 18L62 22L50 38Z" fill="#f9a529" /><path d="M56 18L58 15L64 19L62 22Z" fill="#f4523b" />
          <path d="M83 17Q83 9 90 9T97 17" fill="none" stroke="#1a63d9" stroke-width="3" />
          <linearGradient id="bp" x2="0" y2="1"><stop stop-color="#0aa6f8" /><stop offset="1" stop-color="#0a50e4" /></linearGradient>
          <path d="M75 28Q75 14 90 14T106 28V54Q106 59 101 59H80Q75 59 75 54Z" fill="url(#bp)" /><path d="M78 26Q79 17 90 17T103 26" fill="none" stroke="#bcdcff" stroke-width="1.800" />
          <path d="M79 45Q80 36 90 36T102 45V55H79Z" fill="#2183ff" stroke="#0a3db5" stroke-width="1" /><path d="M80 50H102V53Q102 56 99 56H83Q80 56 80 53Z" fill="#a56bfa" />
        </svg>
      </div>
      ${APPS.map((a) => html`<svg width="110" height="108" viewBox="0 0 110 108">${a}</svg>`)}
      <div class="tray">
        <svg width="74" height="108" viewBox="0 0 74 108"><path d="M2 62.500L13.500 50.500L25 62.500" fill="none" stroke="#fff" stroke-width="3.200" stroke-linecap="round" /></svg>
        <svg width="60" height="108" viewBox="0 0 60 108" fill="none" stroke="#fff" stroke-width="3" stroke-linecap="round">
          <path d="M1.500 53Q20 32 38.500 53M7 59Q20 43.500 33 59M12.500 64Q20 54.500 27.500 64" /><circle cx="20" cy="67" r="2.800" fill="#fff" stroke="none" />
        </svg>
        <svg width="60" height="108" viewBox="0 0 60 108" fill="none" stroke="#fff" stroke-width="2.800" stroke-linejoin="round">
          <path d="M1.500 52H7L16 44V70L7 62.500H1.500ZM24 50.500L37 63.500M37 50.500L24 63.500" />
        </svg>
        <svg width="40" height="108" viewBox="0 0 40 108">
          <path d="M19 46H30Q35 46 35 51V63Q35 68.500 30 68.500H3" fill="none" stroke="#fff" stroke-width="2.600" />
          <path d="M36 53H38Q40 53 40 55V60Q40 62 38 62H36Z" fill="#fff" />
          <path d="M20 50H28Q30 50 30 52V62Q30 65 28 65H9Q19 63 20 50Z" fill="#fff" />
          <path d="M11 37Q17 44 17 52Q17 61 8 62L3 67L2 65Q-1 60 1 52Q3 45 11 37Z" fill="#fff" /><path d="M11 47Q11 57 3 65" stroke="#1c1c1c" stroke-width="1.600" fill="none" />
        </svg>
        <div class="clock">${fit("11:13 PM", 122)}${fit("2/27/2024", 137)}</div>
        <svg width="78" height="108" viewBox="0 0 78 108" fill="none" stroke="#fff" stroke-width="2.800">
          <path d="M19 41Q7 41 6 54V60L2 67.500H32L27 60V55M12 69Q16.500 75 21 69" stroke-linejoin="round" />
          <path d="M13 50H20.500L13 58.500H21M24 41H32L24 50.500H33" />
        </svg>
        <svg width="59" height="108" viewBox="0 0 59 108">
          <linearGradient id="ca" x2="0" y2="1"><stop stop-color="#25aaf3" /><stop offset=".5" stop-color="#3fb07b" /><stop offset="1" stop-color="#f5cb0c" /></linearGradient>
          <linearGradient id="cb" x2="0" y2="1"><stop stop-color="#a453ef" /><stop offset=".6" stop-color="#ef5486" /><stop offset="1" stop-color="#f98a58" /></linearGradient>
          <path d="M17 31H36Q41 31 42 38L45 45H33Q29 45 28 49L25 61Q23 68 17 68H6Q-1 68 1 59L8 38Q10 31 17 31Z" fill="url(#ca)" />
          <path d="M32 31H36Q41 31 42 38L45 45H28Q31 40 32 31Z" fill="#1548cc" />
          <path d="M38 45H52Q59 45 58 53L52 75H14Q11 73 12 69H20Q27 69 29 61L32 50Q33 45 38 45Z" fill="url(#cb)" />
          <rect x="14" y="69.500" width="45" height="18" rx="4" fill="#ffc600" />
          <text x="20" y="84" font-size="15.500" font-weight="700" fill="#111" textLength="34">PRE</text>
        </svg>
      </div>
    `;
  }
}

@customElement("app-root")
class AppRoot extends LitElement {
  static styles = css`
    :host {
      display: block;
      width: 3840px;
      height: 2390px;
      overflow: hidden;
    }
  `;

  render() {
    return html`<browser-chrome></browser-chrome><channel-page></channel-page><task-bar></task-bar>`;
  }
}
